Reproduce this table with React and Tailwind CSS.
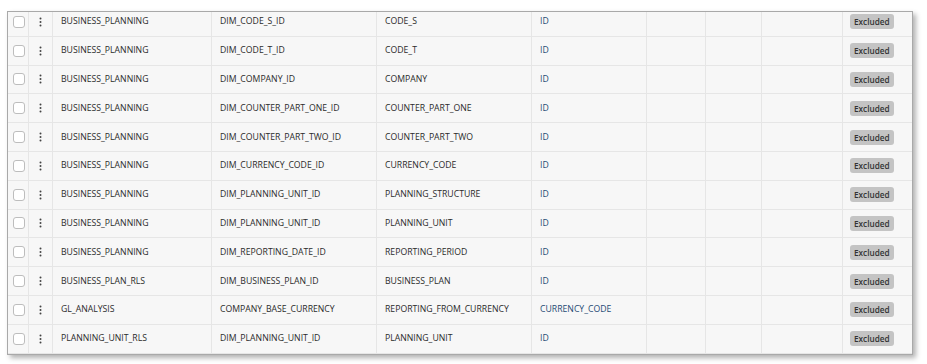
const rows = [
  ['BUSINESS_PLANNING', 'DIM_CODE_S_ID', 'CODE_S', 'ID'],
  ['BUSINESS_PLANNING', 'DIM_CODE_T_ID', 'CODE_T', 'ID'],
  ['BUSINESS_PLANNING', 'DIM_COMPANY_ID', 'COMPANY', 'ID'],
  ['BUSINESS_PLANNING', 'DIM_COUNTER_PART_ONE_ID', 'COUNTER_PART_ONE', 'ID'],
  ['BUSINESS_PLANNING', 'DIM_COUNTER_PART_TWO_ID', 'COUNTER_PART_TWO', 'ID'],
  ['BUSINESS_PLANNING', 'DIM_CURRENCY_CODE_ID', 'CURRENCY_CODE', 'ID'],
  ['BUSINESS_PLANNING', 'DIM_PLANNING_UNIT_ID', 'PLANNING_STRUCTURE', 'ID'],
  ['BUSINESS_PLANNING', 'DIM_PLANNING_UNIT_ID', 'PLANNING_UNIT', 'ID'],
  ['BUSINESS_PLANNING', 'DIM_REPORTING_DATE_ID', 'REPORTING_PERIOD', 'ID'],
  ['BUSINESS_PLAN_RLS', 'DIM_BUSINESS_PLAN_ID', 'BUSINESS_PLAN', 'ID'],
  ['GL_ANALYSIS', 'COMPANY_BASE_CURRENCY', 'REPORTING_FROM_CURRENCY', 'CURRENCY_CODE'],
  ['PLANNING_UNIT_RLS', 'DIM_PLANNING_UNIT_ID', 'PLANNING_UNIT', 'ID'],
];

const cell = 'h-full flex items-center border-r border-[#e6e6e6]';

function Dots() {
  return (
    <svg width="3" height="10" viewBox="0 0 3 10">
      <circle cx="1.5" cy="1.5" r="1" fill="#444" />
      <circle cx="1.5" cy="5" r="1" fill="#444" />
      <circle cx="1.5" cy="8.5" r="1" fill="#444" />
    </svg>
  );
}

export default function App() {
  return (
    <div className="w-[927px] h-[364px] bg-white pt-[11px] pl-[7px] font-['Open_Sans',sans-serif]">
      <div className="w-[906px] h-[344px] border border-[#a9a9a9] bg-[#f7f7f7] overflow-hidden shadow-[3px_3px_5px_rgba(0,0,0,0.3)]">
        <div className="-mt-[4px]">
          {rows.map((r, i) => (
            <div
              key={i}
              className="grid grid-cols-[21px_24px_159px_165px_155px_115px_59px_56px_81px_69px] h-[28.8px] border-b border-[#e6e6e6] text-[8.7px] text-[#2b2b2b]"
            >
              <div className={`${cell} justify-center pl-[2px]`}>
                <div className="w-[12px] h-[12px] rounded-[3px] border border-[#bdbdbd] bg-white" />
              </div>
              <div className={`${cell} justify-center`}>
                <Dots />
              </div>
              <div className={`${cell} pl-[8px]`}>{r[0]}</div>
              <div className={`${cell} pl-[8px]`}>{r[1]}</div>
              <div className={`${cell} pl-[8px]`}>{r[2]}</div>
              <div className={`${cell} pl-[8px] text-[#1f4b75]`}>{r[3]}</div>
              <div className={cell} />
              <div className={cell} />
              <div className={cell} />
              <div className="h-full flex items-center pl-[7px]">
                <span className="px-[4px] h-[15px] leading-[15px] rounded-[3px] bg-[#c4c4c4] text-[#333] text-[8.2px] font-semibold">
                  Excluded
                </span>
              </div>
            </div>
          ))}
        </div>
      </div>
    </div>
  );
}
